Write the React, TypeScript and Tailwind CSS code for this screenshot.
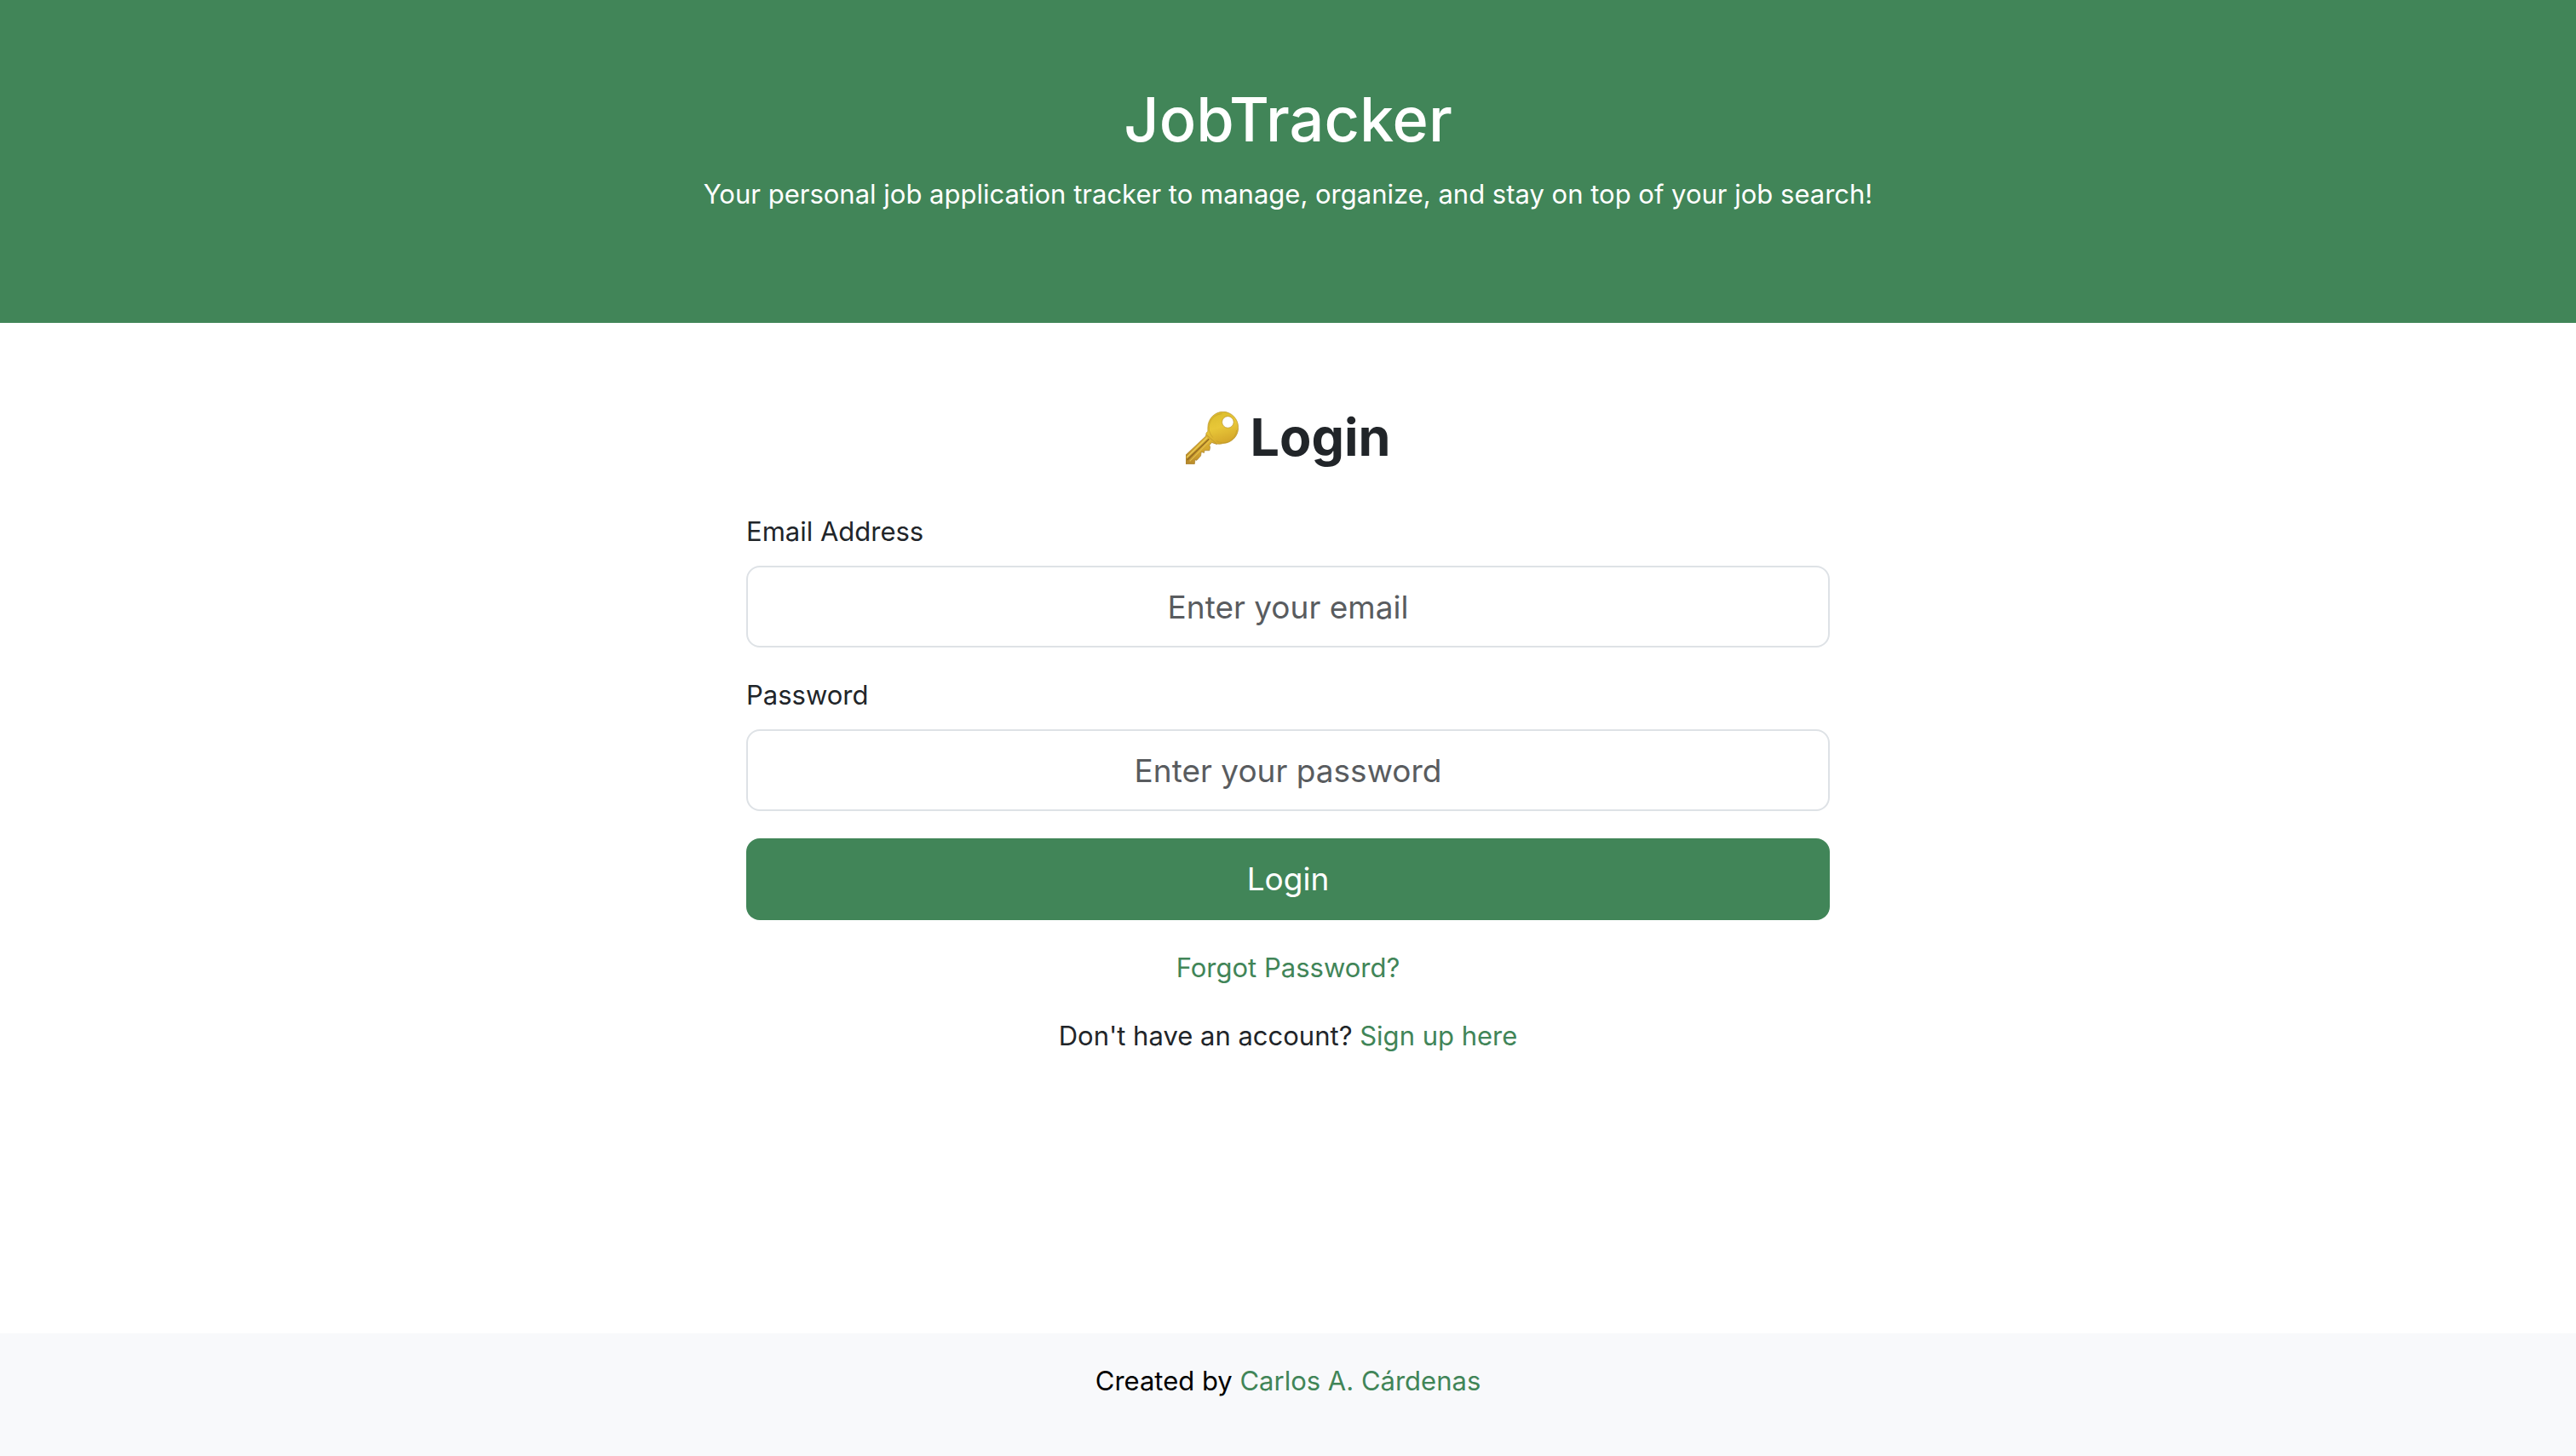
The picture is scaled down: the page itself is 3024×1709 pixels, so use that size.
import type { InputHTMLAttributes } from 'react';

function KeyIcon() {
  return (
    <svg viewBox="0 0 187 187" className="size-[62px] shrink-0" aria-hidden="true">
      <defs>
        <linearGradient id="bow" x1="0" y1="0" x2="0.3" y2="1">
          <stop offset="0" stopColor="#d9bb2c" />
          <stop offset="0.55" stopColor="#e8c738" />
          <stop offset="1" stopColor="#d6a92b" />
        </linearGradient>
        <linearGradient id="blade" x1="1" y1="0" x2="0" y2="1">
          <stop offset="0" stopColor="#e0b932" />
          <stop offset="0.6" stopColor="#d0a22e" />
          <stop offset="1" stopColor="#b3852b" />
        </linearGradient>
      </defs>
      <path
        d="M74 78 L70 88 L0 154 V186 H31 L33 171 L39 173 L53 157 L55 143 L65 146 L66 138 L84 138 L86 127 L84 119 L92 110 L110 116 Z"
        fill="url(#blade)"
        stroke="#a67d28"
        strokeWidth="2"
      />
      <path d="M76 92 L3 163" stroke="#ecce58" strokeWidth="4" />
      <path d="M82 97 L5 172" stroke="#8f6722" strokeWidth="4" />
      <path d="M87 102 L14 176" stroke="#e2bd4a" strokeWidth="4" />
      <path
        fillRule="evenodd"
        d="M132 1a54 56 0 0 1 54 56c0 31-24 55-54 56-8 3-18 3-24 1L72 81c0-5 2-8 6-10V57A54 56 0 0 1 132 1ZM149 17a20 20 0 1 0 0 41 20 20 0 0 0 0-41Z"
        fill="url(#bow)"
        stroke="#b8922a"
        strokeWidth="2"
      />
      <path d="M128 8A48 49 0 0 0 96 92M108 104A48 49 0 0 0 180 66" fill="none" stroke="#c29c2b" strokeWidth="2" />
    </svg>
  );
}

interface FieldProps extends InputHTMLAttributes<HTMLInputElement> {
  id: string;
  label: string;
}

function Field({ id, label, ...props }: FieldProps) {
  return (
    <div className="mb-8">
      <label htmlFor={id} className="mb-4 block">
        {label}
      </label>
      <input
        id={id}
        className="block h-24 w-full rounded-2xl border-2 border-[#dee2e6] bg-white px-8 text-center text-[37px] placeholder:text-[#595c5f]"
        {...props}
      />
    </div>
  );
}

export default function App() {
  return (
    <div className="flex min-h-screen flex-col bg-white font-['Inter',sans-serif] text-[31px] leading-[48px] text-[#212529]">
      <header className="bg-[#418558] px-8 pt-[92px] pb-[127px] text-center text-white">
        <h1 className="mb-4 text-[72px] leading-[96px] font-medium">JobTracker</h1>
        <p>Your personal job application tracker to manage, organize, and stay on top of your job search!</p>
      </header>
      <main className="mx-auto w-full max-w-[1272px] grow pt-24">
        <h1 className="mb-12 flex items-center justify-center gap-[14px] text-[61px] leading-[77px] font-bold">
          <KeyIcon />
          Login
        </h1>
        <form onSubmit={(e) => e.preventDefault()}>
          <Field id="email" label="Email Address" type="email" placeholder="Enter your email" />
          <Field id="password" label="Password" type="password" placeholder="Enter your password" />
          <button type="submit" className="h-24 w-full rounded-2xl bg-[#418558] text-[37px] text-white">
            Login
          </button>
        </form>
        <div className="mt-8 text-center">
          <a href="#forgot" className="text-[#418558]">
            Forgot Password?
          </a>
        </div>
        <p className="mt-8 text-center">
          Don't have an account?{' '}
          <a href="#signup" className="text-[#418558]">
            Sign up here
          </a>
        </p>
      </main>
      <footer className="bg-[#f8f9fb] pt-8 pb-16 text-center text-black">
        <p>
          Created by{' '}
          <a href="#author" className="text-[#418558]">
            Carlos A. Cárdenas
          </a>
        </p>
      </footer>
    </div>
  );
}
